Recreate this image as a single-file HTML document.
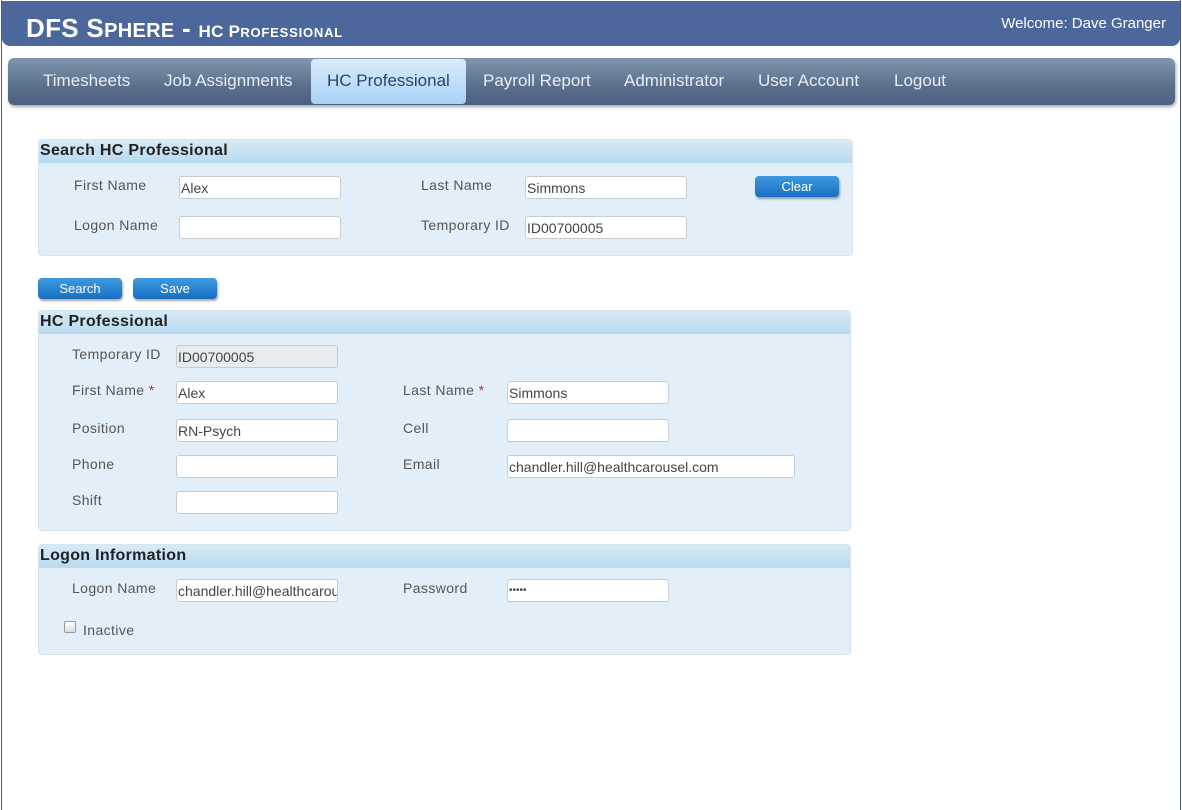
<!DOCTYPE html>
<html><head><meta charset="utf-8"><style>
*{box-sizing:border-box;margin:0;padding:0}
body{width:1182px;height:810px;background:#fff;font-family:"Liberation Sans",Arial,sans-serif;position:relative;overflow:hidden}
.frame{position:absolute;left:1px;top:0;width:1180px;height:810px;border-left:1px solid #4a5f80;border-right:1px solid #4a5f80}
.hdr{position:absolute;left:2px;top:1px;width:1178px;height:45px;background:#4b679c;border-radius:0 0 8px 8px}
.title{position:absolute;left:24px;top:12px;color:#fff;font-weight:bold;font-size:26px;letter-spacing:.3px;white-space:nowrap}
.title .s{font-size:20px}
.title .m{font-size:17px}
.title .n{font-size:13px;letter-spacing:.8px}
.wel{position:absolute;right:14px;top:14px;color:#fff;font-size:15px}
.nav{position:absolute;left:8px;top:58px;width:1167px;height:47px;border-radius:6px;background:linear-gradient(#8196ae,#5a6f8b 60%,#4c6080);box-shadow:1px 2px 3px rgba(0,0,0,.35)}
.nav span{position:absolute;top:13px;color:#e6edf5;font-size:17px}
.act{position:absolute;left:303px;top:1px;width:155px;height:45px;border-radius:4px;background:linear-gradient(#d9ecfc,#a8d2f6)}
.nav span.a{color:#2c4566}
.panel{position:absolute;background:#e2eff8;border-radius:4px;border:1px solid #d6e4ee}
.ph{height:23px;background:linear-gradient(#d8eaf6,#b8daf0);border-radius:4px 4px 0 0;font-weight:bold;color:#222;font-size:16px;padding:2px 0 0 1px;letter-spacing:.3px}
.l{position:absolute;font-size:14px;color:#555;letter-spacing:.4px}
.r{color:#d22}
.i{position:absolute;height:23px;background:#fff;border:1px solid #c8ccd0;border-radius:3px;font-size:14px;color:#444;padding:3px 0 0 1px;white-space:nowrap;overflow:hidden}
.i.g{background:#e9ecee}
.btn{position:absolute;height:21px;border-radius:4px;background:linear-gradient(#3d9ae0,#1a6fc0);color:#fff;font-size:13px;text-align:center;padding-top:3px;box-shadow:1px 2px 2px rgba(0,0,0,.35)}
.cb{position:absolute;width:12px;height:12px;border:1px solid #999;border-radius:2px;background:linear-gradient(#fff,#ddd)}
</style></head><body>
<div class="frame"></div>
<div class="hdr"><div class="title">DFS S<span class="s">PHERE</span> - <span class="m">HC P</span><span class="n">ROFESSIONAL</span></div><div class="wel">Welcome: Dave Granger</div></div>
<div class="nav"><div class="act"></div>
<span style="left:35px">Timesheets</span><span style="left:156px">Job Assignments</span><span class="a" style="left:319px">HC Professional</span><span style="left:475px">Payroll Report</span><span style="left:616px">Administrator</span><span style="left:750px">User Account</span><span style="left:886px">Logout</span></div>

<div class="panel" style="left:38px;top:139px;width:815px;height:117px"><div class="ph">Search HC Professional</div></div>
<div class="l" style="left:74px;top:177px">First Name</div><div class="i" style="left:179px;top:176px;width:162px">Alex</div>
<div class="l" style="left:421px;top:177px">Last Name</div><div class="i" style="left:525px;top:176px;width:162px">Simmons</div>
<div class="btn" style="left:755px;top:176px;width:84px">Clear</div>
<div class="l" style="left:74px;top:217px">Logon Name</div><div class="i" style="left:179px;top:216px;width:162px"></div>
<div class="l" style="left:421px;top:217px">Temporary ID</div><div class="i" style="left:525px;top:216px;width:162px">ID00700005</div>

<div class="btn" style="left:38px;top:278px;width:84px">Search</div>
<div class="btn" style="left:133px;top:278px;width:84px">Save</div>

<div class="panel" style="left:38px;top:310px;width:813px;height:221px"><div class="ph">HC Professional</div></div>
<div class="l" style="left:72px;top:346px">Temporary ID</div><div class="i g" style="left:176px;top:345px;width:162px">ID00700005</div>
<div class="l" style="left:72px;top:382px">First Name <span class="r">*</span></div><div class="i" style="left:176px;top:381px;width:162px">Alex</div>
<div class="l" style="left:403px;top:382px">Last Name <span class="r">*</span></div><div class="i" style="left:507px;top:381px;width:162px">Simmons</div>
<div class="l" style="left:72px;top:420px">Position</div><div class="i" style="left:176px;top:419px;width:162px">RN-Psych</div>
<div class="l" style="left:403px;top:420px">Cell</div><div class="i" style="left:507px;top:419px;width:162px"></div>
<div class="l" style="left:72px;top:456px">Phone</div><div class="i" style="left:176px;top:455px;width:162px"></div>
<div class="l" style="left:403px;top:456px">Email</div><div class="i" style="left:507px;top:455px;width:288px">chandler.hill@healthcarousel.com</div>
<div class="l" style="left:72px;top:492px">Shift</div><div class="i" style="left:176px;top:491px;width:162px"></div>

<div class="panel" style="left:38px;top:544px;width:813px;height:111px"><div class="ph">Logon Information</div></div>
<div class="l" style="left:72px;top:580px">Logon Name</div><div class="i" style="left:176px;top:579px;width:162px">chandler.hill@healthcarousel.com</div>
<div class="l" style="left:403px;top:580px">Password</div><div class="i" style="left:507px;top:579px;width:162px;font-size:10px;padding-top:5px">&#8226;&#8226;&#8226;&#8226;&#8226;</div>
<div class="cb" style="left:64px;top:621px"></div><div class="l" style="left:83px;top:622px">Inactive</div>
</body></html>
